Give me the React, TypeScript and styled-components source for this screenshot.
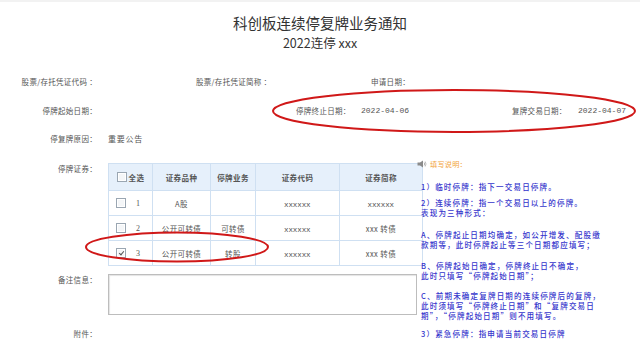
import React from 'react';
import styled, { createGlobalStyle } from 'styled-components';

const GlobalStyle = createGlobalStyle`
  html, body {
    margin: 0;
    padding: 0;
    background: #fff;
  }
  body {
    font-family: "Noto Sans CJK SC", "Noto Sans", sans-serif;
    color: #555;
  }
`;

const Page = styled.div`
  position: relative;
  width: 640px;
  height: 357px;
  overflow: hidden;
  padding-top: 12px;
  box-sizing: border-box;
  border-top: 2px solid #f2f2f2;
`;

const Header = styled.header`
  display: flex;
  flex-direction: column;
  align-items: center;
  gap: 3px;
`;

const Title = styled.h1`
  margin: 0;
  font-size: 14.5px;
  line-height: 18px;
  font-weight: 400;
  color: #333;
`;

const SubTitle = styled.div`
  font-size: 12.5px;
  line-height: 16px;
  color: #333;
`;

const InfoRow = styled.div<{ $cols: string; $top: number }>`
  display: grid;
  grid-template-columns: ${({ $cols }) => $cols};
  align-items: center;
  margin-top: ${({ $top }) => $top}px;
  height: 12px;
`;

const Label = styled.span<{ $align?: 'left' | 'right' }>`
  font-size: 7.5px;
  line-height: 12px;
  letter-spacing: 0.3px;
  color: #555;
  white-space: nowrap;
  text-align: ${({ $align }) => $align || 'left'};
`;

const DateValue = styled.span`
  font-family: "Liberation Mono", monospace;
  font-size: 8px;
  line-height: 12px;
  color: #555;
`;

const FormRow = styled.div<{ $top: number }>`
  display: grid;
  grid-template-columns: 97px 1fr;
  column-gap: 11px;
  align-items: start;
  margin-top: ${({ $top }) => $top}px;
`;

const Value = styled.span`
  font-size: 8px;
  line-height: 12px;
  letter-spacing: 0.75px;
  color: #555;
`;

const Body = styled.div`
  display: flex;
  align-items: flex-start;
  margin-top: 18px;
`;

const FormColumn = styled.div`
  width: 417px;
  flex: none;
`;

const Table = styled.table`
  width: 309px;
  border-collapse: collapse;
  table-layout: fixed;
  font-size: 7.5px;
  color: #555;
  th, td {
    border: 1px solid #cfe0f2;
    padding: 0;
    text-align: center;
    white-space: nowrap;
  }
`;

const HeadCell = styled.th<{ $w: number }>`
  width: ${({ $w }) => $w}px;
  height: 26px;
  background: #e6f0fb;
  font-weight: 700;
  font-size: 7.5px;
  color: #555;
  letter-spacing: 0.4px;
`;

const Cell = styled.td<{ $code?: boolean }>`
  height: 21px;
  font-family: ${({ $code }) =>
    $code ? '"Liberation Sans", Arial, sans-serif' : 'inherit'};
  font-size: ${({ $code }) => ($code ? '8px' : '7.5px')};
  letter-spacing: 0.4px;
  padding-top: ${({ $code }) => ($code ? '3px' : '0')} !important;
  color: #555;
`;

const PickCell = styled.div<{ $head?: boolean }>`
  display: flex;
  align-items: center;
  justify-content: ${({ $head }) => ($head ? 'center' : 'flex-start')};
  gap: ${({ $head }) => ($head ? '2px' : '10px')};
  padding-left: ${({ $head }) => ($head ? '0' : '7px')};
  font-weight: ${({ $head }) => ($head ? 700 : 400)};
`;

const Box = styled.span<{ $checked?: boolean }>`
  position: relative;
  display: inline-block;
  width: 8px;
  height: 8px;
  border: 1px solid #9aa6b2;
  background: #f4f6f8;
  box-shadow: inset 0 0 0 1px #fff;
  &::after {
    content: '';
    display: ${({ $checked }) => ($checked ? 'block' : 'none')};
    position: absolute;
    left: 2.5px;
    top: 0.5px;
    width: 2px;
    height: 4px;
    border: solid #555;
    border-width: 0 1px 1px 0;
    transform: rotate(40deg);
  }
`;

const Num = styled.span`
  font-family: "Liberation Serif", serif;
  font-size: 8px;
`;

const Memo = styled.div`
  height: 41px;
  border: 1px solid #bdbdbd;
  box-shadow: inset 1px 1px 1px #e4e4e4;
  box-sizing: border-box;
  background: #fff;
`;

const Notes = styled.aside`
  margin-left: 4px;
  margin-top: -4px;
  color: #3535cc;
  font-size: 7.5px;
  line-height: 10px;
  letter-spacing: 1.2px;
  white-space: nowrap;
`;

const NotesHead = styled.div`
  display: flex;
  align-items: center;
  gap: 3px;
  margin-left: -4px;
  color: #f2a33a;
  letter-spacing: 0.2px;
  font-size: 7.2px;
`;

const Para = styled.p<{ $gap: number }>`
  margin: ${({ $gap }) => $gap}px 0 0;
  font-weight: 500;
`;

const Overlay = styled.svg`
  position: absolute;
  left: 0;
  top: 0;
  pointer-events: none;
`;

const Speaker = () => (
  <svg width="10" height="8" viewBox="0 0 10 8">
    <rect x="0.5" y="2.5" width="2.5" height="3" fill="#8a8a8a" />
    <path d="M3 2.5 L6 0.5 L6 7.5 L3 5.5 Z" fill="#8a8a8a" />
    <path d="M7.2 2.5 Q8.3 4 7.2 5.5" stroke="#9a9a9a" strokeWidth="0.8" fill="none" />
    <path d="M8.2 1.5 Q9.8 4 8.2 6.5" stroke="#b0b0b0" strokeWidth="0.8" fill="none" />
  </svg>
);

const rows = [
  { n: 1, kind: 'A股', biz: '', code: 'xxxxxx', name: 'xxxxxx', checked: false },
  { n: 2, kind: '公开可转债', biz: '可转债', code: 'xxxxxx', name: 'xxx 转债', checked: false },
  { n: 3, kind: '公开可转债', biz: '转股', code: 'xxxxxx', name: 'xxx 转债', checked: true },
];

export default function App() {
  return (
    <Page>
      <GlobalStyle />
      <Header>
        <Title>科创板连续停复牌业务通知</Title>
        <SubTitle>2022连停 xxx</SubTitle>
      </Header>

      <InfoRow $cols="97px 99px 175px 1fr" $top={25}>
        <Label $align="right">股票/存托凭证代码 ：</Label>
        <span />
        <Label>股票/存托凭证简称 ：</Label>
        <Label>申请日期：</Label>
      </InfoRow>

      <InfoRow $cols="97px 199px 65px 151px 66px 1fr" $top={17}>
        <Label $align="right">停牌起始日期：</Label>
        <span />
        <Label>停牌终止日期：</Label>
        <DateValue>2022-04-06</DateValue>
        <Label>复牌交易日期：</Label>
        <DateValue>2022-04-07</DateValue>
      </InfoRow>

      <FormRow $top={16}>
        <Label $align="right">停复牌原因：</Label>
        <Value>重要公告</Value>
      </FormRow>

      <Body>
        <FormColumn>
          <FormRow $top={0}>
            <Label $align="right">停牌证券：</Label>
            <Table>
              <thead>
                <tr>
                  <HeadCell $w={43}>
                    <PickCell $head>
                      <Box />
                      全选
                    </PickCell>
                  </HeadCell>
                  <HeadCell $w={57}>证券品种</HeadCell>
                  <HeadCell $w={44}>停牌业务</HeadCell>
                  <HeadCell $w={83}>证券代码</HeadCell>
                  <HeadCell $w={82}>证券简称</HeadCell>
                </tr>
              </thead>
              <tbody>
                {rows.map((r) => (
                  <tr key={r.n}>
                    <Cell>
                      <PickCell>
                        <Box $checked={r.checked} />
                        <Num>{r.n}</Num>
                      </PickCell>
                    </Cell>
                    <Cell>{r.kind}</Cell>
                    <Cell>{r.biz}</Cell>
                    <Cell $code>{r.code}</Cell>
                    <Cell $code={r.name === 'xxxxxx'}>{r.name}</Cell>
                  </tr>
                ))}
              </tbody>
            </Table>
          </FormRow>

          <FormRow $top={8}>
            <Label $align="right">备注信息：</Label>
            <Memo />
          </FormRow>

          <FormRow $top={13}>
            <Label $align="right">附件：</Label>
            <span />
          </FormRow>
        </FormColumn>

        <Notes>
          <NotesHead>
            <Speaker />
            填写说明：
          </NotesHead>
          <Para $gap={13}>1）临时停牌：指下一交易日停牌。</Para>
          <Para $gap={6}>
            2）连续停牌：指一个交易日以上的停牌。
            <br />
            表现为三种形式：
          </Para>
          <Para $gap={12}>
            A、停牌起止日期均确定，如公开增发、配股缴
            <br />
            款期等，此时停牌起止等三个日期都应填写；
          </Para>
          <Para $gap={11}>
            B、停牌起始日确定，停牌终止日不确定，
            <br />
            此时只填写“停牌起始日期”；
          </Para>
          <Para $gap={10}>
            C、前期未确定复牌日期的连续停牌后的复牌，
            <br />
            此时须填写“停牌终止日期”和“复牌交易日
            <br />
            期”，“停牌起始日期”则不用填写。
          </Para>
          <Para $gap={8}>3）紧急停牌：指申请当前交易日停牌</Para>
        </Notes>
      </Body>

      <Overlay width="640" height="357" viewBox="0 0 640 357">
        <ellipse cx="454" cy="109" rx="181" ry="21" fill="none" stroke="#d01818" strokeWidth="2" />
        <ellipse cx="177" cy="245" rx="91" ry="14.5" fill="none" stroke="#d01818" strokeWidth="2" />
      </Overlay>
    </Page>
  );
}
